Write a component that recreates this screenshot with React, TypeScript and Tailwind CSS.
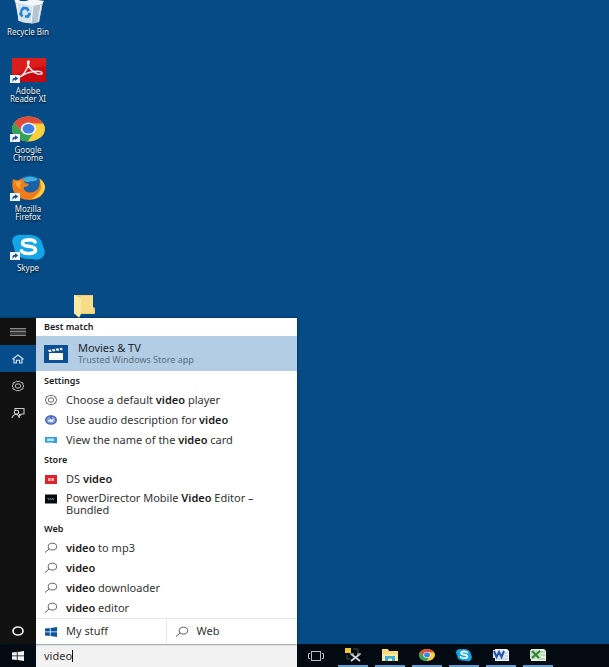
import React, { useState } from 'react';

const Shortcut = () => (
  <g>
    <rect x="0" y="18" width="10" height="8" fill="#f3f7fb" />
    <path d="M2.5 25 V22.5 Q2.5 20.8 5 20.8 V19.3 L8.3 21.6 L5 24 V22.5 Q3.8 22.5 2.5 25Z" fill="#174f93" />
  </g>
);

const RecycleBin = () => (
  <svg viewBox="0 0 36 26" className="h-[26px] w-9" aria-hidden="true">
    <path d="M5 3 L33 3 L29 24 Q18 27 9 23Z" fill="#d6e1e9" />
    <path d="M23 5 L33 3 L29 24 L21 26Z" fill="#b4c6d2" />
    <path d="M4 0 L13 4 L22 1 L34 3 L32 6 L23 8 L5 4Z" fill="#f4f7f9" />
    <path d="M7 6 L9 23 M31 7 L28 24 M23 8 L21 25" stroke="#f4f8fb" strokeWidth="1" fill="none" />
    <path d="M11 13 L13.5 10 L17 10.5 L18.5 13 M20 15 L18 18.5 L15 18.5 M12.5 18.5 L10.5 16 L11.5 13.5" stroke="#1e83d2" strokeWidth="2.6" fill="none" />
  </svg>
);

const Adobe = () => (
  <svg viewBox="0 0 36 26" className="h-[26px] w-9" aria-hidden="true">
    <rect x="2" y="1" width="34" height="24" fill="#c8090f" />
    <path d="M2 1 H36 V9 Q20 10 2 20Z" fill="#d91d1b" />
    <path d="M8 20.5 Q14 19 18 9 Q20 4 18.5 4 Q16.5 4.5 18.5 9 Q22 15 28 17 Q32 18 32 16 Q31 13.5 24 14.5 Q16 15.5 10 20" fill="none" stroke="#fbe9e9" strokeWidth="1.5" />
    <Shortcut />
  </svg>
);

const ChromeShapes = () => (
  <>
    <ellipse cx="18.5" cy="13" rx="16.5" ry="12.5" fill="#f9cf3c" />
    <path d="M4.2 6.8 A16.5 12.5 0 0 1 33.2 7.5 H18.5 L11 15Z" fill="#df4c3c" />
    <path d="M4.2 6.8 A16.5 12.5 0 0 0 17.5 25.5 L25 15 L18.5 18 L11 15Z" fill="#35a257" />
    <ellipse cx="18.5" cy="12.8" rx="7.7" ry="6.2" fill="#f5f6f3" />
    <ellipse cx="18.5" cy="12.8" rx="6" ry="4.8" fill="#3f80e5" />
  </>
);

const Chrome = () => (
  <svg viewBox="0 0 36 26" className="h-[26px] w-9" aria-hidden="true">
    <ChromeShapes />
    <Shortcut />
  </svg>
);

const Firefox = () => (
  <svg viewBox="0 0 36 26" className="h-[26px] w-9" aria-hidden="true">
    <ellipse cx="20" cy="12" rx="14.5" ry="11.5" fill="#1a62a8" />
    <path d="M12 4 Q20 -1 28 4 Q25 7 21 6 Q17 8 14 6Z" fill="#3fb0e3" />
    <path d="M3 4 Q6 6 9 5 Q12 3 15 4 Q13 6 15 8 L19 9 Q18 12 14 12 Q13 15 17 17 Q23 19 28 14 Q31 8 29 3 Q36 8 35 14 Q33 24 20 25 Q8 25 4 17 Q1 11 3 4Z" fill="#ee7b1c" />
    <path d="M30 4 Q36 9 34.8 14 Q32 23 21 24.5 Q31 18 31 12Z" fill="#fbd044" />
    <path d="M5 7 Q9 5 12 7 Q9 10 11 14 Q8 13 6 10Z" fill="#f6a436" />
    <Shortcut />
  </svg>
);

const SkypeShapes = () => (
  <>
    <path d="M3 4 Q6 0 13 1 Q31 -1 33 12 Q37 19 32 24 Q28 27 22 25 Q5 26 4 13 Q1 8 3 4Z" fill="#12a5e7" />
    <path d="M25 8 Q24 5.8 18.5 5.8 Q12.5 6 12.5 9 Q12.5 11.6 18.5 12.3 Q25.5 13 25.5 16.3 Q25 19.5 19 19.5 Q13 19.5 11.5 16.8" fill="none" stroke="#fff" strokeWidth="3.6" strokeLinecap="round" />
  </>
);

const Skype = () => (
  <svg viewBox="0 0 36 26" className="h-[26px] w-9" aria-hidden="true">
    <SkypeShapes />
    <Shortcut />
  </svg>
);

const Folder = () => (
  <svg viewBox="0 0 36 26" className="h-[26px] w-9" aria-hidden="true">
    <path d="M8 2 H27 V14 L29 15 V21 H8Z" fill="#eecb6b" />
    <path d="M15 3 H27 V14 L28 20 H15Z" fill="#f7dc8a" />
    <path d="M8 2 L15 5 V21 L13 25 L8 20Z" fill="#fbe8a6" />
  </svg>
);

const HomeIcon = () => (
  <svg viewBox="0 0 14 12" className="h-3 w-3.5" fill="none" stroke="#d5e4f2" strokeWidth="1.1" aria-hidden="true">
    <path d="M1.5 6.2 L7 2 L12.5 6.2 M3 5.8 V10 H5.4 V7.2 H8.6 V10 H11 V5.8" />
  </svg>
);

const GearIcon = () => (
  <svg viewBox="0 0 14 12" className="h-3 w-3.5 shrink-0" fill="none" stroke="currentColor" aria-hidden="true">
    <path d="M5.5 1 L7 1.8 L8.5 1 L10 2.6 L12 3 L11.8 4.8 L13 6 L11.8 7.2 L12 9 L10 9.4 L8.5 11 L7 10.2 L5.5 11 L4 9.4 L2 9 L2.2 7.2 L1 6 L2.2 4.8 L2 3 L4 2.6Z" strokeWidth="1" />
    <ellipse cx="7" cy="6" rx="2.8" ry="2.2" strokeWidth="1" />
  </svg>
);

const FeedbackIcon = () => (
  <svg viewBox="0 0 14 12" className="h-3 w-3.5" fill="none" stroke="#c9c9c9" strokeWidth="1.1" aria-hidden="true">
    <path d="M4 3.5 V1.5 H13 V7 H10.5 L8.5 9 V7" />
    <ellipse cx="5.5" cy="5.2" rx="2.2" ry="1.9" />
    <path d="M1 11 Q2 7.5 5.2 7.2 Q7.5 7.5 8.5 11" />
  </svg>
);

const SearchIcon = () => (
  <svg viewBox="0 0 14 12" className="h-3 w-3.5 shrink-0" fill="none" stroke="#5c5c5c" aria-hidden="true">
    <ellipse cx="8.4" cy="4.6" rx="4.2" ry="3.4" />
    <path d="M5.2 6.9 L1 10.5" />
  </svg>
);

const WindowsIcon = () => (
  <svg viewBox="0 0 14 12" className="h-3 w-3.5 shrink-0" fill="currentColor" aria-hidden="true">
    <path d="M1 2.6 L5.8 2 V5.6 H1Z M6.6 1.9 L13 1.1 V5.6 H6.6Z M1 6.3 H5.8 V10 L1 9.4Z M6.6 6.3 H13 V10.9 L6.6 10.1Z" />
  </svg>
);

const AudioIcon = () => (
  <svg viewBox="0 0 14 12" className="h-3 w-3.5 shrink-0" aria-hidden="true">
    <ellipse cx="7" cy="6" rx="6" ry="4.8" fill="#4c68b8" />
    <ellipse cx="7" cy="6" rx="4.4" ry="3.4" fill="#7f9ee0" />
    <path d="M3.5 7.5 L7 4 V6 L10 4.8 L9 8Z" fill="#f0f4ff" />
    <path d="M7 1.5 V5" stroke="#2b459a" />
  </svg>
);

const CardIcon = () => (
  <svg viewBox="0 0 14 12" className="h-3 w-3.5 shrink-0" aria-hidden="true">
    <rect x="1" y="3" width="12" height="6" fill="#2f9fe0" />
    <rect x="3" y="4.5" width="7" height="2.5" fill="#b9e5fb" />
    <rect x="1" y="8" width="8" height="1" fill="#7cc7ee" />
  </svg>
);

const DsIcon = () => (
  <svg viewBox="0 0 14 12" className="h-3 w-3.5 shrink-0" aria-hidden="true">
    <rect x="1" y="2" width="12" height="9" fill="#e3202c" />
    <rect x="4" y="5" width="6" height="3" fill="#f7b5b8" />
    <path d="M7 5 V8" stroke="#e3202c" strokeWidth="0.8" />
  </svg>
);

const DirectorIcon = () => (
  <svg viewBox="0 0 14 12" className="h-3 w-3.5 shrink-0" aria-hidden="true">
    <rect x="1" y="1.5" width="12" height="9" fill="#07090f" />
    <path d="M3.5 5.5 H10.5 M4 6.7 H10" stroke="#6d8f97" strokeWidth="0.9" strokeDasharray="1.5 0.8" />
  </svg>
);

const MoviesIcon = () => (
  <svg viewBox="0 0 24 18" className="h-[18px] w-6 shrink-0" aria-hidden="true">
    <rect width="24" height="18" fill="#0b4f94" />
    <rect x="5" y="8" width="14" height="7" fill="#fff" />
    <path d="M4 5 L18 2.8 L18.6 5 L5 7Z" fill="#fff" />
    <path d="M7.2 4 L8.5 7 M11 3.4 L12.3 6.4 M14.8 2.8 L16.1 5.8" stroke="#0b4f94" strokeWidth="1.2" />
  </svg>
);

const shortcuts = [
  { name: 'Recycle Bin', icon: RecycleBin },
  { name: 'Adobe Reader XI', icon: Adobe },
  { name: 'Google Chrome', icon: Chrome },
  { name: 'Mozilla Firefox', icon: Firefox },
  { name: 'Skype', icon: Skype },
];

const groups = [
  {
    title: 'Settings',
    items: [
      { text: 'Choose a default *video* player', icon: GearIcon },
      { text: 'Use audio description for *video*', icon: AudioIcon },
      { text: 'View the name of the *video* card', icon: CardIcon },
    ],
  },
  {
    title: 'Store',
    items: [
      { text: 'DS *video*', icon: DsIcon },
      { text: 'PowerDirector Mobile *Video* Editor – Bundled', icon: DirectorIcon },
    ],
  },
  {
    title: 'Web',
    items: [
      { text: '*video* to mp3', icon: SearchIcon },
      { text: '*video*', icon: SearchIcon },
      { text: '*video* downloader', icon: SearchIcon },
      { text: '*video* editor', icon: SearchIcon },
    ],
  },
];

const taskbarApps = [
  {
    name: 'Remote tools',
    icon: (
      <svg viewBox="0 0 20 16" className="h-4 w-5" aria-hidden="true">
        <rect x="2" y="1" width="6" height="5" fill="#edc630" />
        <path d="M10 2 H15 V6 M4 8 V12 H7" stroke="#355a48" fill="none" />
        <path d="M8 7 L17 14 M17 7 L8 14" stroke="#d2d7da" strokeWidth="1.7" />
        <path d="M7 7 H11 M14 7 H18" stroke="#9aa4aa" strokeWidth="1.5" />
      </svg>
    ),
  },
  {
    name: 'File Explorer',
    icon: (
      <svg viewBox="0 0 20 16" className="h-4 w-5" aria-hidden="true">
        <path d="M2 2 H8 L9 4 H18 V14 H2Z" fill="#f6dc7c" />
        <path d="M2 7 H18 V14 H2Z" fill="#fae99d" />
        <path d="M5 9 H15 V14 H12 V11.5 H8 V14 H5Z" fill="#35aee0" />
      </svg>
    ),
  },
  {
    name: 'Google Chrome',
    icon: <svg viewBox="0 -1 37 28" className="h-3.5 w-[18px]" aria-hidden="true"><ChromeShapes /></svg>,
  },
  {
    name: 'Skype',
    icon: <svg viewBox="0 -1 37 28" className="h-3.5 w-[18px]" aria-hidden="true"><SkypeShapes /></svg>,
  },
  {
    name: 'Word',
    icon: (
      <svg viewBox="0 0 20 16" className="h-4 w-5" aria-hidden="true">
        <path d="M4 2 H16 L18 4 V14 H4Z" fill="#f4f6fa" />
        <path d="M14 6 H17 M14 9 H17 M6 12 H17" stroke="#a8b8d8" />
        <rect x="2" y="3" width="12" height="8" fill="#dbe6f8" />
        <path d="M3 4 L5.5 10 L8 5 L10.5 10 L13 4" fill="none" stroke="#2354aa" strokeWidth="2" />
      </svg>
    ),
  },
  {
    name: 'Excel',
    icon: (
      <svg viewBox="0 0 20 16" className="h-4 w-5" aria-hidden="true">
        <path d="M3 2 H16 L18 4 V14 H3Z" fill="#e8f2e4" />
        <path d="M13 5 H17 M13 8 H17 M10 12 H17" stroke="#86b880" />
        <rect x="2" y="3" width="11" height="9" fill="#c4e0bd" />
        <path d="M4 4 L11 11 M12 4 L4 11" stroke="#2f8038" strokeWidth="2" />
      </svg>
    ),
  },
];

// text between asterisks is the matched part of the query
const Highlighted = ({ text }: { text: string }) => (
  <span className="my-auto">
    {text.split('*').map((part, i) => (i % 2 ? <b key={i} className="font-semibold text-[#1a1a1a]">{part}</b> : part))}
  </span>
);

export default function App() {
  const [query, setQuery] = useState('video');

  return (
    <div className="flex min-h-screen flex-col overflow-hidden bg-[#064b86] font-['Noto_Sans',sans-serif] text-[#333333]">
      <main className="relative flex flex-1 flex-col">
        <div className="-mt-0.5 grid auto-rows-[59px] grid-cols-[56px_56px]">
          {shortcuts.map(({ name, icon: Icon }) => (
            <button key={name} className="col-start-1 flex flex-col items-center text-[#eef3f8]">
              <Icon />
              <span className="mt-1 w-12 text-center text-[8px] leading-2 [text-shadow:0_1px_2px_#000]">{name}</span>
            </button>
          ))}
          <button aria-label="Folder" className="col-start-2 row-start-6 flex flex-col items-center">
            <Folder />
          </button>
        </div>

        <div className="absolute bottom-0 left-0 flex shadow-[0_0_2px_#001c3a]">
          <nav className="flex w-9 flex-col bg-[#111111] text-[#bdbdbd]">
            <button aria-label="Menu" className="flex h-[27px] items-center justify-center">
              <svg viewBox="0 0 16 8" className="h-2 w-4" stroke="#8a8a8a" aria-hidden="true">
                <rect width="16" height="8" fill="#3a3a3a" stroke="none" />
                <path d="M0 0.5 H16 M0 3.5 H16 M0 7.5 H16" />
              </svg>
            </button>
            <button aria-label="Home" className="flex h-[27px] items-center justify-center bg-[#074c8a]"><HomeIcon /></button>
            <button aria-label="Settings" className="flex h-[27px] items-center justify-center"><GearIcon /></button>
            <button aria-label="Feedback" className="flex h-[27px] items-center justify-center"><FeedbackIcon /></button>
            <button aria-label="Cortana" className="mt-auto flex h-[26px] items-center justify-center">
              <svg viewBox="0 0 14 12" className="h-3 w-3.5" aria-hidden="true">
                <ellipse cx="7" cy="6" rx="5" ry="4" fill="none" stroke="#ededed" strokeWidth="1.7" />
              </svg>
            </button>
          </nav>

          <section className="w-[261px] bg-white text-[11px]">
            <h2 className="flex h-[18px] items-center px-2 text-[9px] font-semibold text-[#1a1a1a]">Best match</h2>
            <button className="flex h-[35px] w-full items-center gap-2.5 bg-[#b3cde4] px-2 text-left">
              <MoviesIcon />
              <span className="flex flex-col">
                <span className="leading-3 text-[#1f2730]">Movies &amp; TV</span>
                <span className="text-[9px] leading-3 text-[#5b6f82]">Trusted Windows Store app</span>
              </span>
            </button>
            {groups.map((group) => (
              <div key={group.title}>
                <h2 className="flex h-[19px] items-center px-2 text-[9px] font-semibold text-[#1a1a1a]">{group.title}</h2>
                <ul>
                  {group.items.map(({ text, icon: Icon }) => (
                    <li key={text}>
                      <button className="flex min-h-5 w-full gap-2 py-[3px] pr-8 pl-2 text-left leading-3 text-[#333333]">
                        <span className="mt-px text-[#666666]"><Icon /></span>
                        <Highlighted text={text} />
                      </button>
                    </li>
                  ))}
                </ul>
              </div>
            ))}
            <div className="grid h-[26px] grid-cols-2 border-t border-[#e8e8e8]">
              <button className="flex items-center gap-2 border-r border-[#e8e8e8] px-2">
                <span className="text-[#0b559f]"><WindowsIcon /></span>
                My stuff
              </button>
              <button className="flex items-center gap-2 px-2"><SearchIcon />Web</button>
            </div>
          </section>
        </div>
      </main>

      <footer className="flex h-[23px] bg-[#030a12]">
        <button aria-label="Start" className="flex w-9 items-center justify-center text-[#f2f2f2]"><WindowsIcon /></button>
        <div className="flex w-[261px] items-center bg-[#f2f2f2] px-2 text-[11px]">
          <input
            type="text"
            aria-label="Search"
            value={query}
            onChange={(e) => setQuery(e.target.value)}
            className="h-5 [field-sizing:content] bg-transparent outline-none"
          />
          <span className="h-3 w-px bg-black" />
        </div>
        <button aria-label="Task view" className="flex w-[37px] items-center justify-center">
          <svg viewBox="0 0 18 12" className="h-3 w-[18px]" fill="none" stroke="#b9bdc1" aria-hidden="true">
            <rect x="4.5" y="1.5" width="9" height="9" />
            <path d="M3 3.5 H1.5 V8.5 H3 M15 3.5 H16.5 V8.5 H15" />
          </svg>
        </button>
        {taskbarApps.map((app) => (
          <button key={app.name} aria-label={app.name} className="flex w-[37px] flex-col items-center">
            <span className="flex flex-1 items-center">{app.icon}</span>
            <span className="h-0.5 w-[30px] bg-[#5f9fd2]" />
          </button>
        ))}
      </footer>
    </div>
  );
}
